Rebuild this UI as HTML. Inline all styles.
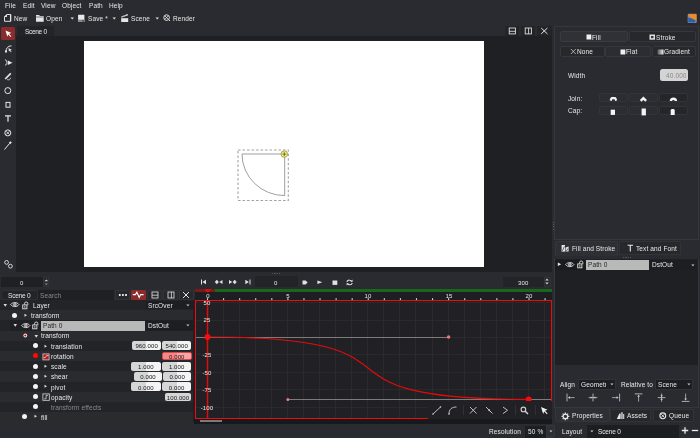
<!DOCTYPE html>
<html><head><meta charset="utf-8">
<style>
*{margin:0;padding:0;box-sizing:border-box}
html,body{width:700px;height:438px;overflow:hidden;background:#2a2b30;font-family:"Liberation Sans",sans-serif;color:#e8e8e8;font-size:6.5px;letter-spacing:0.12px;line-height:1}
.a{position:absolute}
.t{position:absolute;white-space:nowrap;line-height:1}
svg{overflow:visible}
.t{will-change:transform}
</style></head><body>
<div class="t" style="left:5px;top:2.5px;">File</div>
<div class="t" style="left:23px;top:2.5px;">Edit</div>
<div class="t" style="left:41px;top:2.5px;">View</div>
<div class="t" style="left:62px;top:2.5px;">Object</div>
<div class="t" style="left:89px;top:2.5px;">Path</div>
<div class="t" style="left:109px;top:2.5px;">Help</div>
<div class="t" style="left:13.7px;top:15.5px;">New</div>
<div class="t" style="left:46px;top:15.5px;">Open</div>
<div class="t" style="left:88px;top:15.5px;">Save *</div>
<div class="t" style="left:130.7px;top:15.5px;">Scene</div>
<div class="t" style="left:173px;top:15.5px;">Render</div>
<svg class="a" style="left:3px;top:13px;" width="10" height="10" viewBox="0 0 10 10"><path d="M4 1.5 H7.6 V8.3 H1.5 V4 Z" fill="none" stroke="#ddd" stroke-width="1"/><path d="M4 1 V4 H1 Z" fill="#e6e6e6"/><path d="M7.6 1.5 V8.3" stroke="#e6e6e6" stroke-width="1.3"/></svg>
<svg class="a" style="left:35px;top:14px;" width="10" height="9" viewBox="0 0 10 9"><path d="M1 1 H4 L5 2 H8.7 V7.7 H1 Z" fill="#e6e6e6"/><path d="M1 3 H8.7" stroke="#2a2b30" stroke-width="0.6"/></svg>
<svg class="a" style="left:69.8px;top:17px;" width="5" height="3" viewBox="0 0 5 3"><path d="M0.5 0.5 H4 L2.25 2.5 Z" fill="#ddd"/></svg>
<svg class="a" style="left:112.3px;top:17px;" width="5" height="3" viewBox="0 0 5 3"><path d="M0.5 0.5 H4 L2.25 2.5 Z" fill="#ddd"/></svg>
<svg class="a" style="left:154.8px;top:17px;" width="5" height="3" viewBox="0 0 5 3"><path d="M0.5 0.5 H4 L2.25 2.5 Z" fill="#ddd"/></svg>
<svg class="a" style="left:77px;top:14px;" width="10" height="9" viewBox="0 0 10 9"><rect x="1.1" y="0.7" width="6.3" height="7.3" rx="0.4" fill="#e8e8e8"/><rect x="1.1" y="5.6" width="6.3" height="2.4" fill="#8a8a8a"/><rect x="5.2" y="6.3" width="1.6" height="1.2" fill="#333"/></svg>
<svg class="a" style="left:120px;top:13px;" width="9" height="10" viewBox="0 0 9 10"><path d="M1.2 3.6 L7.6 1 L8 2.2 L1.6 4.8 Z" fill="#e6e6e6"/><path d="M2.8 3 L3.4 4.2 M4.8 2.2 L5.4 3.4" stroke="#2a2b30" stroke-width="0.5"/><rect x="1.2" y="5.2" width="7" height="3.8" fill="#e6e6e6"/></svg>
<svg class="a" style="left:163px;top:14px;" width="8" height="8" viewBox="0 0 8 8"><circle cx="3.6" cy="3.6" r="2.8" fill="none" stroke="#e6e6e6" stroke-width="1"/><path d="M2 2 L5.2 5.2 M5.2 2 L2 5.2" stroke="#e6e6e6" stroke-width="0.8"/><path d="M5.6 5.6 L7 7" stroke="#e6e6e6" stroke-width="1"/></svg>
<svg class="a" style="left:687px;top:13px;" width="11" height="11" viewBox="0 0 11 11"><rect x="0.7" y="0.7" width="9" height="9.3" rx="1" fill="#8a8f98"/><path d="M1.5 1.2 H9.4 V7.2 L4.6 5.4 L2 3 Z" fill="#f28a1c"/><path d="M1.2 4.4 L5 5.6 L8.6 7.6 L8 9.6 H1.2 Z" fill="#2a60b0"/></svg>
<div class="a" style="left:0px;top:26px;width:16px;height:246px;background:#2a2b30;"></div>
<div class="a" style="left:1px;top:27px;width:14px;height:13px;background:#8b2b2b;border-radius:1.5px"></div>
<svg class="a" style="left:4px;top:29px;" width="9" height="9" viewBox="0 0 9 9"><path d="M1.5 1.5 L7.5 4 L5 4.8 L7.3 7.2 L6.5 8 L4.2 5.6 L3.3 7.8 Z" fill="#fff"/></svg>
<svg class="a" style="left:4px;top:44px;" width="9" height="9" viewBox="0 0 9 9"><path d="M2 7.5 C2 4 4 2 7.5 1.8" fill="none" stroke="#e6e6e6" stroke-width="1"/><rect x="1" y="6.5" width="2" height="2" fill="#e6e6e6"/><path d="M4.5 4 L8 6 L6.5 6.3 L7.5 8 L6.8 8.3 L5.9 6.8 L4.9 7.6 Z" fill="#e6e6e6"/></svg>
<svg class="a" style="left:4px;top:58px;" width="9" height="9" viewBox="0 0 9 9"><path d="M1 1.8 C3.5 1.8 3.5 7.2 1 7.2" fill="none" stroke="#e6e6e6" stroke-width="1"/><path d="M3.8 2.5 L8.5 4.8 L3.8 7 Z" fill="#e6e6e6"/></svg>
<svg class="a" style="left:4px;top:71.5px;" width="9" height="9" viewBox="0 0 9 9"><path d="M1.2 7 L6.8 1.4" stroke="#e6e6e6" stroke-width="1.7"/><path d="M3.2 7.6 C5 8.2 6.6 7.6 6.4 5.8" fill="none" stroke="#e6e6e6" stroke-width="0.8"/></svg>
<svg class="a" style="left:4px;top:87px;" width="8" height="8" viewBox="0 0 8 8"><circle cx="3.8" cy="3.6" r="3" fill="none" stroke="#e6e6e6" stroke-width="1"/></svg>
<svg class="a" style="left:4px;top:101px;" width="8" height="8" viewBox="0 0 8 8"><rect x="2" y="1.4" width="4" height="4.8" fill="none" stroke="#e6e6e6" stroke-width="1"/></svg>
<svg class="a" style="left:4px;top:114px;" width="8" height="9" viewBox="0 0 8 9"><path d="M1 1.2 H7 V2.4 H4.6 V7.8 H3.4 V2.4 H1 Z" fill="#e6e6e6"/></svg>
<svg class="a" style="left:4px;top:129px;" width="8" height="8" viewBox="0 0 8 8"><circle cx="3.8" cy="3.9" r="3" fill="none" stroke="#e6e6e6" stroke-width="1"/><path d="M2.2 2.3 L5.4 5.5 M5.4 2.3 L2.2 5.5" stroke="#e6e6e6" stroke-width="0.9"/></svg>
<svg class="a" style="left:3px;top:140px;" width="10" height="11" viewBox="0 0 10 11"><path d="M1.5 9.5 L6.5 3.5" stroke="#e6e6e6" stroke-width="1"/><path d="M5.8 2.8 L7.5 1.2 L8.8 2.5 L7.2 4.2 Z" fill="#e6e6e6"/></svg>
<svg class="a" style="left:3px;top:259px;" width="11" height="11" viewBox="0 0 11 11"><circle cx="3.6" cy="3.4" r="1.9" fill="none" stroke="#e6e6e6" stroke-width="0.9"/><circle cx="7.4" cy="7.2" r="1.9" fill="none" stroke="#e6e6e6" stroke-width="0.9"/></svg>
<div class="a" style="left:16px;top:36px;width:536px;height:236px;background:#1f2024;"></div>
<div class="a" style="left:17px;top:26px;width:37px;height:10px;background:#232428;"></div>
<div class="t" style="left:25px;top:29.3px;letter-spacing:-0.3px">Scene 0</div>
<div class="a" style="left:504.5px;top:26px;width:14.5px;height:9.5px;background:#232428;"></div>
<div class="a" style="left:520.5px;top:26px;width:14.5px;height:9.5px;background:#232428;"></div>
<div class="a" style="left:536.5px;top:26px;width:15px;height:9.5px;background:#232428;"></div>
<svg class="a" style="left:508px;top:27px;" width="9" height="8" viewBox="0 0 9 8"><rect x="1.2" y="1" width="6.2" height="5.9" fill="none" stroke="#e6e6e6" stroke-width="0.85"/><path d="M1.2 4.3 H7.4" stroke="#e6e6e6" stroke-width="0.85"/></svg>
<svg class="a" style="left:524px;top:27px;" width="9" height="8" viewBox="0 0 9 8"><rect x="1.2" y="1" width="6.2" height="5.9" fill="none" stroke="#e6e6e6" stroke-width="0.85"/><path d="M4.6 1 V6.9" stroke="#e6e6e6" stroke-width="0.85"/></svg>
<svg class="a" style="left:540px;top:27px;" width="9" height="8" viewBox="0 0 9 8"><path d="M1.2 1 L7.4 6.9 M7.4 1 L1.2 6.9" stroke="#e6e6e6" stroke-width="1"/></svg>
<div class="a" style="left:84px;top:41px;width:400px;height:226px;background:#ffffff;"></div>
<svg class="a" style="left:236px;top:148px;" width="56" height="56" viewBox="0 0 56 56"><rect x="2" y="2" width="50.3" height="50.5" fill="none" stroke="#a3a3a3" stroke-width="1.1" stroke-dasharray="2.6 1.9"/><path d="M6 6 H48.7 V47.6 A42.7 41.6 0 0 1 6 6 Z" fill="none" stroke="#8e8e8e" stroke-width="0.85"/><circle cx="48.3" cy="6.1" r="3.3" fill="#f0ee6a" stroke="#6a6a40" stroke-width="0.55"/><path d="M46.4 6.1 H50.2 M48.3 4.2 V8" stroke="#3a3a30" stroke-width="0.65"/></svg>
<div class="a" style="left:554px;top:26px;width:145px;height:214px;background:transparent;border:1px solid #36373c"></div>
<div class="a" style="left:560px;top:31px;width:68px;height:11px;background:#303136;border:1px solid #3a3b40;border-radius:2px;"></div>
<div class="a" style="left:629px;top:31px;width:67px;height:11px;background:#27282c;border:1px solid #36373c;border-radius:2px;"></div>
<svg class="a" style="left:585.5px;top:34px;" width="6" height="6" viewBox="0 0 6 6"><rect x="0.5" y="0.5" width="4.8" height="5" fill="#f0f0f0"/></svg>
<div class="t" style="left:591.5px;top:34.6px;">Fill</div>
<svg class="a" style="left:648.5px;top:34px;" width="7" height="6" viewBox="0 0 7 6"><rect x="0.5" y="0.5" width="5.5" height="5.2" fill="#e0e0e0"/><rect x="2" y="2" width="2.5" height="2.2" fill="#333"/></svg>
<div class="t" style="left:655.5px;top:34.6px;">Stroke</div>
<div class="a" style="left:560px;top:46px;width:45px;height:11px;background:#27282c;border:1px solid #36373c;border-radius:2px;"></div>
<div class="a" style="left:605px;top:46px;width:46px;height:11px;background:#2c2d32;border:1px solid #36373c;border-radius:2px;"></div>
<div class="a" style="left:652px;top:46px;width:44px;height:11px;background:#27282c;border:1px solid #36373c;border-radius:2px;"></div>
<svg class="a" style="left:570px;top:48px;" width="7" height="7" viewBox="0 0 7 7"><path d="M0.8 1 L5.8 6 M5.8 1 L0.8 6" stroke="#e0e0e0" stroke-width="0.7"/></svg>
<div class="t" style="left:577px;top:49px;">None</div>
<svg class="a" style="left:619.5px;top:48.5px;" width="6" height="6" viewBox="0 0 6 6"><rect x="0.5" y="0.5" width="4.8" height="5" fill="#f0f0f0"/></svg>
<div class="t" style="left:625.5px;top:49px;">Flat</div>
<svg class="a" style="left:656.5px;top:48.5px;" width="7" height="6" viewBox="0 0 7 6"><defs><linearGradient id="gg"><stop offset="0" stop-color="#555"/><stop offset="1" stop-color="#eee"/></linearGradient></defs><rect x="0.5" y="0.5" width="6" height="5" fill="url(#gg)"/></svg>
<div class="t" style="left:663.5px;top:49px;">Gradient</div>
<div class="t" style="left:568px;top:73px;">Width</div>
<div class="a" style="left:660px;top:69px;width:28px;height:12px;background:#d4d4d4;border-radius:2.5px"></div>
<div class="t" style="left:665.5px;top:72.5px;color:#8a8a8a;">40.000</div>
<div class="t" style="left:568px;top:95.5px;">Join:</div>
<div class="t" style="left:568px;top:108.2px;">Cap:</div>
<div class="a" style="left:599.3px;top:93.4px;width:29px;height:9px;background:#2c2d32;border:1px solid #33343a;border-radius:2px;"></div>
<div class="a" style="left:599.3px;top:106.3px;width:29px;height:9.2px;background:#2c2d32;border:1px solid #33343a;border-radius:2px;"></div>
<div class="a" style="left:628.6px;top:93.4px;width:29px;height:9px;background:#2c2d32;border:1px solid #33343a;border-radius:2px;"></div>
<div class="a" style="left:628.6px;top:106.3px;width:29px;height:9.2px;background:#2c2d32;border:1px solid #33343a;border-radius:2px;"></div>
<div class="a" style="left:658.6px;top:93.4px;width:29px;height:9px;background:#25262a;border:1px solid #33343a;border-radius:2px;"></div>
<div class="a" style="left:658.6px;top:106.3px;width:29px;height:9.2px;background:#25262a;border:1px solid #33343a;border-radius:2px;"></div>
<svg class="a" style="left:608.5px;top:95px;" width="9" height="7" viewBox="0 0 9 7"><path d="M1.6 5.6 L2.6 3.2 H6.2 L7.2 5.6" fill="none" stroke="#f4f4f4" stroke-width="2.2" stroke-linejoin="bevel"/></svg>
<svg class="a" style="left:638.5px;top:94.5px;" width="9" height="7" viewBox="0 0 9 7"><path d="M1.7 5.9 L4.4 3.2 L7.1 5.9" fill="none" stroke="#f4f4f4" stroke-width="2.4" stroke-linejoin="miter"/></svg>
<svg class="a" style="left:668.5px;top:94.5px;" width="9" height="7" viewBox="0 0 9 7"><path d="M1.9 6 C1.9 2.9 6.9 2.9 6.9 6" fill="none" stroke="#f4f4f4" stroke-width="2.4"/></svg>
<svg class="a" style="left:610px;top:109px;" width="6" height="7" viewBox="0 0 6 7"><rect x="0.7" y="0.7" width="4.3" height="5.2" fill="#f4f4f4"/></svg>
<svg class="a" style="left:640.5px;top:107.5px;" width="6" height="8" viewBox="0 0 6 8"><rect x="0.6" y="0.5" width="4.3" height="6.9" fill="#f4f4f4"/></svg>
<svg class="a" style="left:670px;top:108px;" width="6" height="8" viewBox="0 0 6 8"><path d="M0.7 2.2 C0.7 0.6 4.7 0.6 4.7 2.2 V6.9 H0.7 Z" fill="#f4f4f4"/></svg>
<div class="a" style="left:555px;top:241px;width:63px;height:14.5px;background:#2e2f34;border:1px solid #35363b;border-bottom:none;border-radius:2px 2px 0 0"></div>
<div class="a" style="left:619px;top:241px;width:62px;height:14px;background:#27282c;border:1px solid #323338;border-radius:2px 2px 0 0"></div>
<svg class="a" style="left:561px;top:244px;" width="9" height="9" viewBox="0 0 9 9"><path d="M0.6 1 H4 V7.6 H0.6 Z" fill="#e6e6e6"/><path d="M4.6 3.4 L7.6 2.6 V7.6 H4.6 Z" fill="#e6e6e6"/><path d="M1.4 6.8 L3.4 2.4 M5.4 7 L7 4.4" stroke="#2e2f34" stroke-width="0.7"/></svg>
<div class="t" style="left:572px;top:246px;">Fill and Stroke</div>
<svg class="a" style="left:626.5px;top:244px;" width="7" height="9" viewBox="0 0 7 9"><path d="M0.6 1.3 H6 M3.3 1.3 V7.6" stroke="#e6e6e6" stroke-width="1.1"/></svg>
<div class="t" style="left:636px;top:246px;">Text and Font</div>
<div class="a" style="left:623.0px;top:257px;width:1.2px;height:1px;background:#555;"></div>
<div class="a" style="left:625.4px;top:257px;width:1.2px;height:1px;background:#555;"></div>
<div class="a" style="left:627.8px;top:257px;width:1.2px;height:1px;background:#555;"></div>
<div class="a" style="left:630.2px;top:257px;width:1.2px;height:1px;background:#555;"></div>
<div class="a" style="left:554px;top:259px;width:145px;height:106px;background:#1f2024;border-left:1px solid #36373c;border-right:1px solid #36373c"></div>
<div class="a" style="left:555px;top:259.5px;width:31px;height:10px;background:#1a1b1e;"></div>
<svg class="a" style="left:557px;top:262px;" width="5" height="5" viewBox="0 0 5 5"><path d="M0.8 0.6 L4.2 2.3 L0.8 4 Z" fill="#e8e8e8"/></svg>
<svg class="a" style="left:565px;top:261px;" width="10" height="8" viewBox="0 0 10 8"><path d="M0.6 3.6 C2.6 0.9 7 0.9 9 3.6 C7 6.3 2.6 6.3 0.6 3.6 Z" fill="none" stroke="#e0e0e0" stroke-width="0.9"/><circle cx="4.8" cy="3.6" r="1.5" fill="#9a9a9a" stroke="#e0e0e0" stroke-width="0.6"/></svg>
<svg class="a" style="left:577px;top:260px;" width="8" height="9" viewBox="0 0 8 9"><path d="M2.6 3.8 V2.2 C2.6 0.6 5.8 0.6 5.8 2.2 V4.2" fill="none" stroke="#e0e0e0" stroke-width="0.9"/><rect x="0.7" y="3.9" width="4.2" height="3.9" fill="#2a2b2f" stroke="#e0e0e0" stroke-width="0.9"/><rect x="2.3" y="5.2" width="1" height="1.4" fill="#e0e0e0"/></svg>
<div class="a" style="left:586px;top:260px;width:63px;height:10px;background:#b9b9b9;"></div>
<div class="t" style="left:588px;top:262.3px;color:#262626;">Path 0</div>
<div class="a" style="left:649px;top:260px;width:48px;height:10px;background:#1d1e22;"></div>
<div class="t" style="left:651.5px;top:262px;">DstOut</div>
<svg class="a" style="left:691px;top:263.5px;" width="4" height="3" viewBox="0 0 4 3"><path d="M0.3 0.5 H3.5 L1.9 2.2 Z" fill="#ccc"/></svg>
<div class="t" style="left:559.5px;top:382px;">Align</div>
<div class="a" style="left:578px;top:379px;width:38px;height:10.5px;background:#1d1e22;border:1px solid #323338;border-radius:1px"></div>
<div class="t" style="left:580.5px;top:382px;width:25px;overflow:hidden">Geometry</div>
<svg class="a" style="left:610px;top:383px;" width="4" height="3" viewBox="0 0 4 3"><path d="M0.3 0.5 H3.5 L1.9 2.2 Z" fill="#ccc"/></svg>
<div class="t" style="left:620.5px;top:382px;">Relative to</div>
<div class="a" style="left:655px;top:379px;width:38px;height:10.5px;background:#1d1e22;border:1px solid #323338;border-radius:1px"></div>
<div class="t" style="left:657.5px;top:382px;">Scene</div>
<svg class="a" style="left:687px;top:383px;" width="4" height="3" viewBox="0 0 4 3"><path d="M0.3 0.5 H3.5 L1.9 2.2 Z" fill="#ccc"/></svg>
<svg class="a" style="left:565.5px;top:393px;" width="10" height="10" viewBox="0 0 10 10"><path d="M1 0.6 V8.4" stroke="#cfcfcf" stroke-width="0.8"/><path d="M2.6 4.6 H8.6" stroke="#cfcfcf" stroke-width="0.7"/><path d="M2 4.6 L4 3.3 V5.9 Z" fill="#cfcfcf"/></svg>
<svg class="a" style="left:587.5px;top:393px;" width="10" height="10" viewBox="0 0 10 10"><path d="M5 0.6 V8.4" stroke="#cfcfcf" stroke-width="0.8"/><path d="M0.6 4.6 H9.4" stroke="#cfcfcf" stroke-width="0.7"/><path d="M4.4 4.6 L2.6 3.4 V5.8 Z M5.6 4.6 L7.4 3.4 V5.8 Z" fill="#cfcfcf"/></svg>
<svg class="a" style="left:610.5px;top:393px;" width="10" height="10" viewBox="0 0 10 10"><path d="M8.6 0.6 V8.4" stroke="#cfcfcf" stroke-width="0.8"/><path d="M1 4.6 H7" stroke="#cfcfcf" stroke-width="0.7"/><path d="M7.6 4.6 L5.6 3.3 V5.9 Z" fill="#cfcfcf"/></svg>
<svg class="a" style="left:633.5px;top:393px;" width="10" height="10" viewBox="0 0 10 10"><path d="M0.8 0.9 H8.4" stroke="#cfcfcf" stroke-width="0.8"/><path d="M4.6 2.4 V8.6" stroke="#cfcfcf" stroke-width="0.7"/><path d="M4.6 1.8 L3.3 3.8 H5.9 Z" fill="#cfcfcf"/></svg>
<svg class="a" style="left:657px;top:393px;" width="10" height="10" viewBox="0 0 10 10"><path d="M0.8 4.6 H8.4" stroke="#cfcfcf" stroke-width="0.8"/><path d="M4.6 0.4 V8.8" stroke="#cfcfcf" stroke-width="0.7"/><path d="M4.6 4 L3.4 2.3 H5.8 Z M4.6 5.2 L3.4 6.9 H5.8 Z" fill="#cfcfcf"/></svg>
<svg class="a" style="left:680.5px;top:393px;" width="10" height="10" viewBox="0 0 10 10"><path d="M0.8 8.4 H8.4" stroke="#cfcfcf" stroke-width="0.8"/><path d="M4.6 0.6 V6.8" stroke="#cfcfcf" stroke-width="0.7"/><path d="M4.6 7.4 L3.3 5.4 H5.9 Z" fill="#cfcfcf"/></svg>
<div class="a" style="left:554px;top:364px;width:145px;height:44px;background:transparent;border:1px solid #36373c;border-top:none"></div>
<div class="a" style="left:555px;top:408px;width:54.5px;height:14px;background:#2e2f34;border:1px solid #35363b;border-top:none;border-radius:0 0 2px 2px"></div>
<div class="a" style="left:610.3px;top:408.5px;width:41px;height:13.5px;background:#26272b;border:1px solid #323338;border-radius:0 0 2px 2px"></div>
<div class="a" style="left:652.8px;top:408.5px;width:41px;height:13.5px;background:#26272b;border:1px solid #323338;border-radius:0 0 2px 2px"></div>
<svg class="a" style="left:560.5px;top:411.5px;" width="9" height="9" viewBox="0 0 9 9"><circle cx="4.4" cy="4.4" r="2.3" fill="none" stroke="#e6e6e6" stroke-width="1.2"/><path d="M6.90 4.40 L8.30 4.40 M6.17 6.17 L7.16 7.16 M4.40 6.90 L4.40 8.30 M2.63 6.17 L1.64 7.16 M1.90 4.40 L0.50 4.40 M2.63 2.63 L1.64 1.64 M4.40 1.90 L4.40 0.50 M6.17 2.63 L7.16 1.64 " stroke="#e6e6e6" stroke-width="1.2"/></svg>
<div class="t" style="left:572px;top:413px;">Properties</div>
<svg class="a" style="left:616px;top:411px;" width="9" height="9" viewBox="0 0 9 9"><path d="M0.8 8 L3.4 2.6 H4.6 V8 Z" fill="#e6e6e6"/><path d="M5.3 8 V1.2 H6.6 V8 Z" fill="#e6e6e6"/><path d="M7.2 8 V3 H8.2 V8 Z" fill="#e6e6e6"/></svg>
<div class="t" style="left:626.5px;top:413px;">Assets</div>
<svg class="a" style="left:658.5px;top:411.5px;" width="8" height="8" viewBox="0 0 8 8"><circle cx="3.8" cy="3.8" r="2.9" fill="none" stroke="#e6e6e6" stroke-width="1.1"/><path d="M2.3 2.3 L5.3 5.3 M5.3 2.3 L2.3 5.3" stroke="#e6e6e6" stroke-width="0.9"/></svg>
<div class="t" style="left:669px;top:413px;">Queue</div>
<div class="a" style="left:1px;top:277px;width:42px;height:9.5px;background:#202024;border-radius:1px"></div>
<div class="t" style="left:19.8px;top:279.6px;font-size:6px;">0</div>
<div class="a" style="left:43px;top:277px;width:5.5px;height:9.5px;background:#27282c;border:1px solid #323338"></div>
<svg class="a" style="left:43.5px;top:277.5px;" width="5" height="9" viewBox="0 0 5 9"><path d="M0.4 3.2 L2.3 1.4 L4.2 3.2 Z" fill="#d0d0d0"/><path d="M0.6 5.6 L2.3 7.2 L4 5.6 Z" fill="#888"/></svg>
<div class="a" style="left:1px;top:290px;width:37px;height:9.5px;background:#232428;border:1px solid #2f3035;border-radius:1px"></div>
<div class="t" style="left:8px;top:293px;letter-spacing:-0.2px">Scene 0</div>
<div class="a" style="left:38px;top:290px;width:76px;height:9.5px;background:#1f2024;"></div>
<div class="t" style="left:40.2px;top:293px;color:#8a8a8a;">Search</div>
<div class="a" style="left:115px;top:290px;width:14.5px;height:9.5px;background:#27282c;border:1px solid #323338;border-radius:1px"></div>
<svg class="a" style="left:117.5px;top:292px;" width="10" height="6" viewBox="0 0 10 6"><circle cx="1.8" cy="3" r="1.05" fill="#fff"/><circle cx="4.9" cy="3" r="1.05" fill="#fff"/><circle cx="8" cy="3" r="1.05" fill="#fff"/></svg>
<div class="a" style="left:130.5px;top:290px;width:15.5px;height:9.5px;background:#8b2b2b;border-radius:1px"></div>
<svg class="a" style="left:132px;top:291px;" width="13" height="8" viewBox="0 0 13 8"><path d="M0.8 3.6 H3.4 L4.9 1.2 L7.2 6.4 L8.6 3.6 H11.6" fill="none" stroke="#fff" stroke-width="1.1"/></svg>
<div class="a" style="left:147px;top:290px;width:14.5px;height:9.5px;background:#27282c;border:1px solid #323338;border-radius:1px"></div>
<svg class="a" style="left:150.5px;top:291px;" width="8" height="8" viewBox="0 0 8 8"><rect x="1" y="1" width="6" height="6" fill="none" stroke="#e6e6e6" stroke-width="0.8"/><path d="M1 4.2 H7" stroke="#e6e6e6" stroke-width="0.8"/></svg>
<div class="a" style="left:163px;top:290px;width:14.5px;height:9.5px;background:#27282c;border:1px solid #323338;border-radius:1px"></div>
<svg class="a" style="left:166.5px;top:291px;" width="8" height="8" viewBox="0 0 8 8"><rect x="1" y="1" width="6" height="6" fill="none" stroke="#e6e6e6" stroke-width="0.8"/><path d="M4.4 1 V7" stroke="#e6e6e6" stroke-width="0.8"/></svg>
<div class="a" style="left:179px;top:290px;width:14.5px;height:9.5px;background:#27282c;border:1px solid #323338;border-radius:1px"></div>
<svg class="a" style="left:182px;top:291px;" width="8" height="8" viewBox="0 0 8 8"><path d="M1 1 L7 7 M7 1 L1 7" stroke="#e6e6e6" stroke-width="1"/></svg>
<div class="a" style="left:0px;top:300.0px;width:195px;height:10.7px;background:#232428;"></div>
<div class="a" style="left:0px;top:310.2px;width:195px;height:10.7px;background:#2a2b2f;"></div>
<div class="a" style="left:0px;top:320.4px;width:195px;height:10.7px;background:#232428;"></div>
<div class="a" style="left:0px;top:330.6px;width:195px;height:10.7px;background:#2a2b2f;"></div>
<div class="a" style="left:0px;top:340.8px;width:195px;height:10.7px;background:#232428;"></div>
<div class="a" style="left:0px;top:351.0px;width:195px;height:10.7px;background:#2a2b2f;"></div>
<div class="a" style="left:0px;top:361.2px;width:195px;height:10.7px;background:#232428;"></div>
<div class="a" style="left:0px;top:371.4px;width:195px;height:10.7px;background:#2a2b2f;"></div>
<div class="a" style="left:0px;top:381.6px;width:195px;height:10.7px;background:#232428;"></div>
<div class="a" style="left:0px;top:391.8px;width:195px;height:10.7px;background:#2a2b2f;"></div>
<div class="a" style="left:0px;top:402.0px;width:195px;height:10.7px;background:#232428;"></div>
<div class="a" style="left:0px;top:412.2px;width:195px;height:10.7px;background:#2a2b2f;"></div>
<div class="a" style="left:10px;top:320.4px;width:185px;height:10.2px;background:#1f2024;"></div>
<svg class="a" style="left:2.5px;top:303.0px;" width="5" height="5" viewBox="0 0 5 5"><path d="M0.5 1 H4 L2.25 3.8 Z" fill="#ddd"/></svg>
<svg class="a" style="left:10px;top:301.2px;" width="10" height="8" viewBox="0 0 10 8"><path d="M0.6 3.6 C2.6 0.9 7 0.9 9 3.6 C7 6.3 2.6 6.3 0.6 3.6 Z" fill="none" stroke="#e0e0e0" stroke-width="0.9"/><circle cx="4.8" cy="3.6" r="1.5" fill="#9a9a9a" stroke="#e0e0e0" stroke-width="0.6"/></svg>
<svg class="a" style="left:21.5px;top:300.6px;" width="8" height="9" viewBox="0 0 8 9"><path d="M2.6 3.8 V2.2 C2.6 0.6 5.8 0.6 5.8 2.2 V4.2" fill="none" stroke="#e0e0e0" stroke-width="0.9"/><rect x="0.7" y="3.9" width="4.2" height="3.9" fill="#2a2b2f" stroke="#e0e0e0" stroke-width="0.9"/><rect x="2.3" y="5.2" width="1" height="1.4" fill="#e0e0e0"/></svg>
<div class="t" style="left:33px;top:303.2px;">Layer</div>
<div class="a" style="left:145.5px;top:300.7px;width:48px;height:8.7px;background:#1d1e22;"></div>
<div class="t" style="left:148px;top:302.8px;">SrcOver</div>
<svg class="a" style="left:186px;top:303.8px;" width="4" height="3" viewBox="0 0 4 3"><path d="M0.3 0.5 H3.5 L1.9 2.2 Z" fill="#ccc"/></svg>
<svg class="a" style="left:12.4px;top:312.7px;" width="6" height="6" viewBox="0 0 6 6"><circle cx="2.5" cy="2.5" r="2.5" fill="#f4f4f4"/></svg>
<svg class="a" style="left:23.8px;top:312.8px;" width="4" height="5" viewBox="0 0 4 5"><path d="M0.5 0.8 L3 2.3 L0.5 3.8 Z" fill="#ddd"/></svg>
<div class="t" style="left:30.7px;top:312.5px;">transform</div>
<svg class="a" style="left:12.8px;top:323.4px;" width="5" height="5" viewBox="0 0 5 5"><path d="M0.5 1 H4 L2.25 3.8 Z" fill="#ddd"/></svg>
<svg class="a" style="left:20.5px;top:321.59999999999997px;" width="10" height="8" viewBox="0 0 10 8"><path d="M0.6 3.6 C2.6 0.9 7 0.9 9 3.6 C7 6.3 2.6 6.3 0.6 3.6 Z" fill="none" stroke="#e0e0e0" stroke-width="0.9"/><circle cx="4.8" cy="3.6" r="1.5" fill="#9a9a9a" stroke="#e0e0e0" stroke-width="0.6"/></svg>
<svg class="a" style="left:31.5px;top:321.0px;" width="8" height="9" viewBox="0 0 8 9"><path d="M2.6 3.8 V2.2 C2.6 0.6 5.8 0.6 5.8 2.2 V4.2" fill="none" stroke="#e0e0e0" stroke-width="0.9"/><rect x="0.7" y="3.9" width="4.2" height="3.9" fill="#2a2b2f" stroke="#e0e0e0" stroke-width="0.9"/><rect x="2.3" y="5.2" width="1" height="1.4" fill="#e0e0e0"/></svg>
<div class="a" style="left:41px;top:320.59999999999997px;width:104px;height:10.2px;background:#b8b8b8;"></div>
<div class="t" style="left:43px;top:323.4px;color:#262626;">Path 0</div>
<div class="a" style="left:145.5px;top:321.2px;width:48px;height:8.7px;background:#1d1e22;"></div>
<div class="t" style="left:148px;top:323.0px;">DstOut</div>
<svg class="a" style="left:186px;top:324.4px;" width="4" height="3" viewBox="0 0 4 3"><path d="M0.3 0.5 H3.5 L1.9 2.2 Z" fill="#ccc"/></svg>
<svg class="a" style="left:23px;top:333.1px;" width="6" height="6" viewBox="0 0 6 6"><circle cx="2.3" cy="2.5" r="1.9" fill="#f4f4f4"/><circle cx="2.3" cy="2.5" r="1.1" fill="#e00"/></svg>
<svg class="a" style="left:33.5px;top:333.6px;" width="5" height="5" viewBox="0 0 5 5"><path d="M0.5 1 H4 L2.25 3.8 Z" fill="#ddd"/></svg>
<div class="t" style="left:41px;top:333.1px;">transform</div>
<svg class="a" style="left:32.7px;top:343.2px;" width="6" height="6" viewBox="0 0 6 6"><circle cx="2.5" cy="2.5" r="2.5" fill="#f4f4f4"/></svg>
<svg class="a" style="left:44px;top:343.5px;" width="4" height="5" viewBox="0 0 4 5"><path d="M0.5 0.8 L3 2.3 L0.5 3.8 Z" fill="#ddd"/></svg>
<div class="t" style="left:50.7px;top:343.7px;">translation</div>
<svg class="a" style="left:32.7px;top:353.4px;" width="6" height="6" viewBox="0 0 6 6"><circle cx="2.5" cy="2.5" r="2.5" fill="#ff0a0a"/></svg>
<svg class="a" style="left:41.5px;top:352.5px;" width="8" height="8" viewBox="0 0 8 8"><rect x="0.5" y="0.5" width="7" height="6.8" fill="#c9c9c9"/><rect x="1.3" y="1.3" width="5.4" height="5.2" fill="#b02020"/><path d="M1.6 4.6 H3.2 L4.6 2.6 H6.4" fill="none" stroke="#fff" stroke-width="0.7"/></svg>
<div class="t" style="left:50.7px;top:353.9px;">rotation</div>
<svg class="a" style="left:32.7px;top:363.59999999999997px;" width="6" height="6" viewBox="0 0 6 6"><circle cx="2.5" cy="2.5" r="2.5" fill="#f4f4f4"/></svg>
<svg class="a" style="left:44px;top:363.9px;" width="4" height="5" viewBox="0 0 4 5"><path d="M0.5 0.8 L3 2.3 L0.5 3.8 Z" fill="#ddd"/></svg>
<div class="t" style="left:50.7px;top:364.09999999999997px;">scale</div>
<svg class="a" style="left:32.7px;top:373.79999999999995px;" width="6" height="6" viewBox="0 0 6 6"><circle cx="2.5" cy="2.5" r="2.5" fill="#f4f4f4"/></svg>
<svg class="a" style="left:44px;top:374.09999999999997px;" width="4" height="5" viewBox="0 0 4 5"><path d="M0.5 0.8 L3 2.3 L0.5 3.8 Z" fill="#ddd"/></svg>
<div class="t" style="left:50.7px;top:374.29999999999995px;">shear</div>
<svg class="a" style="left:32.7px;top:384.0px;" width="6" height="6" viewBox="0 0 6 6"><circle cx="2.5" cy="2.5" r="2.5" fill="#f4f4f4"/></svg>
<svg class="a" style="left:44px;top:384.3px;" width="4" height="5" viewBox="0 0 4 5"><path d="M0.5 0.8 L3 2.3 L0.5 3.8 Z" fill="#ddd"/></svg>
<div class="t" style="left:50.7px;top:384.5px;">pivot</div>
<svg class="a" style="left:32.7px;top:394.2px;" width="6" height="6" viewBox="0 0 6 6"><circle cx="2.5" cy="2.5" r="2.5" fill="#f4f4f4"/></svg>
<svg class="a" style="left:41.5px;top:393.3px;" width="8" height="8" viewBox="0 0 8 8"><rect x="0.9" y="0.9" width="6.4" height="6.4" fill="none" stroke="#d8d8d8" stroke-width="0.8"/><path d="M2.2 5.8 H4.1 V2.4 H6" fill="none" stroke="#d8d8d8" stroke-width="0.8"/></svg>
<div class="t" style="left:50.7px;top:394.7px;">opacity</div>
<svg class="a" style="left:32.7px;top:404.4px;" width="6" height="6" viewBox="0 0 6 6"><circle cx="2.5" cy="2.5" r="2.5" fill="#f4f4f4"/></svg>
<div class="t" style="left:50.7px;top:404.9px;color:#8a8a8a;">transform effects</div>
<svg class="a" style="left:22.4px;top:414.09999999999997px;" width="6" height="6" viewBox="0 0 6 6"><circle cx="2.5" cy="2.5" r="2.5" fill="#f4f4f4"/></svg>
<svg class="a" style="left:33.6px;top:414.4px;" width="4" height="5" viewBox="0 0 4 5"><path d="M0.5 0.8 L3 2.3 L0.5 3.8 Z" fill="#ddd"/></svg>
<div class="t" style="left:41px;top:414.8px;">fill</div>
<div class="a" style="left:131.5px;top:341px;width:29.3px;height:8.8px;background:#f4f4f4;border-radius:2px;background:linear-gradient(to right,#d6d6d6 0,#d6d6d6 50%,#f4f4f4 50%,#f4f4f4 100%);"></div>
<div class="t" style="left:131.5px;top:343.40px;width:29.3px;text-align:center;color:#161616;font-size:6px">960.000</div>
<div class="a" style="left:161.8px;top:341px;width:29.4px;height:8.8px;background:#f4f4f4;border-radius:2px;background:linear-gradient(to right,#d6d6d6 0,#d6d6d6 50%,#f4f4f4 50%,#f4f4f4 100%);"></div>
<div class="t" style="left:161.8px;top:343.40px;width:29.4px;text-align:center;color:#161616;font-size:6px">540.000</div>
<div class="a" style="left:162px;top:352px;width:29.5px;height:8.4px;background:#f6a6a6;border-radius:2px;background:linear-gradient(to right,#f08a8a 0,#f08a8a 50%,#f6a6a6 50%,#f6a6a6 100%);border:0.8px solid #e04848;"></div>
<div class="t" style="left:162px;top:354.40px;width:29.5px;text-align:center;color:#161616;font-size:6px">0.000</div>
<div class="a" style="left:131.2px;top:362px;width:29.7px;height:8.8px;background:#f4f4f4;border-radius:2px;background:linear-gradient(to right,#d6d6d6 0,#d6d6d6 50%,#f4f4f4 50%,#f4f4f4 100%);"></div>
<div class="t" style="left:131.2px;top:364.40px;width:29.7px;text-align:center;color:#161616;font-size:6px">1.000</div>
<div class="a" style="left:162px;top:362px;width:29.4px;height:8.8px;background:#f4f4f4;border-radius:2px;background:linear-gradient(to right,#d6d6d6 0,#d6d6d6 50%,#f4f4f4 50%,#f4f4f4 100%);"></div>
<div class="t" style="left:162px;top:364.40px;width:29.4px;text-align:center;color:#161616;font-size:6px">1.000</div>
<div class="a" style="left:133.5px;top:372px;width:28px;height:8.7px;background:#f4f4f4;border-radius:2px;background:linear-gradient(to right,#d6d6d6 0,#d6d6d6 50%,#f4f4f4 50%,#f4f4f4 100%);"></div>
<div class="t" style="left:133.5px;top:374.40px;width:28px;text-align:center;color:#161616;font-size:6px">0.000</div>
<div class="a" style="left:163px;top:372px;width:28.4px;height:8.7px;background:#f4f4f4;border-radius:2px;background:linear-gradient(to right,#d6d6d6 0,#d6d6d6 50%,#f4f4f4 50%,#f4f4f4 100%);"></div>
<div class="t" style="left:163px;top:374.40px;width:28.4px;text-align:center;color:#161616;font-size:6px">0.000</div>
<div class="a" style="left:131.2px;top:382.2px;width:29.8px;height:8.6px;background:#f4f4f4;border-radius:2px;background:linear-gradient(to right,#d6d6d6 0,#d6d6d6 50%,#f4f4f4 50%,#f4f4f4 100%);"></div>
<div class="t" style="left:131.2px;top:384.60px;width:29.8px;text-align:center;color:#161616;font-size:6px">0.000</div>
<div class="a" style="left:162px;top:382.2px;width:29.2px;height:8.6px;background:#f4f4f4;border-radius:2px;background:linear-gradient(to right,#d6d6d6 0,#d6d6d6 50%,#f4f4f4 50%,#f4f4f4 100%);"></div>
<div class="t" style="left:162px;top:384.60px;width:29.2px;text-align:center;color:#161616;font-size:6px">0.000</div>
<div class="a" style="left:165.3px;top:392.5px;width:26px;height:8.7px;background:#f4f4f4;border-radius:2px;background:linear-gradient(to right,#d6d6d6 0,#d6d6d6 100%,#f4f4f4 100%,#f4f4f4 100%);"></div>
<div class="t" style="left:165.3px;top:394.90px;width:26px;text-align:center;color:#161616;font-size:6px">100.000</div>
<div class="a" style="left:193px;top:300px;width:2px;height:122px;background:#1f2024;"></div>
<div class="a" style="left:272.0px;top:272.5px;width:1.2px;height:1px;background:#555;"></div>
<div class="a" style="left:274.4px;top:272.5px;width:1.2px;height:1px;background:#555;"></div>
<div class="a" style="left:276.8px;top:272.5px;width:1.2px;height:1px;background:#555;"></div>
<div class="a" style="left:279.2px;top:272.5px;width:1.2px;height:1px;background:#555;"></div>
<svg class="a" style="left:200px;top:279px;" width="7" height="6" viewBox="0 0 7 6"><path d="M1.5 0.5 V5.5" stroke="#e0e0e0" stroke-width="1"/><path d="M6 0.7 V5.3 L2.4 3 Z" fill="#e0e0e0"/></svg>
<svg class="a" style="left:213.5px;top:279px;" width="9" height="6" viewBox="0 0 9 6"><path d="M0.8 3 L2.8 0.8 L4.8 3 L2.8 5.2 Z" fill="#e0e0e0"/><path d="M8.5 0.9 V5.1 L5.2 3 Z" fill="#e0e0e0"/></svg>
<svg class="a" style="left:228.5px;top:279px;" width="9" height="6" viewBox="0 0 9 6"><path d="M0 0.9 V5.1 L3.3 3 Z" fill="#e0e0e0"/><path d="M3.7 3 L5.7 0.8 L7.7 3 L5.7 5.2 Z" fill="#e0e0e0"/></svg>
<svg class="a" style="left:244.5px;top:279px;" width="7" height="6" viewBox="0 0 7 6"><path d="M5 0.5 V5.5" stroke="#e0e0e0" stroke-width="1"/><path d="M0.3 0.7 V5.3 L3.9 3 Z" fill="#e0e0e0"/></svg>
<div class="a" style="left:254.5px;top:276px;width:43px;height:11.2px;background:#232428;"></div>
<div class="t" style="left:274px;top:279.8px;font-size:6px;">0</div>
<svg class="a" style="left:301.5px;top:279.5px;" width="7" height="6" viewBox="0 0 7 6"><path d="M0.5 0.4 H3.6 L5.6 2.5 L3.6 4.6 H0.5 Z" fill="#e0e0e0"/></svg>
<svg class="a" style="left:316.5px;top:280px;" width="6" height="5" viewBox="0 0 6 5"><path d="M0.4 0.5 V4 L5.3 2.2 Z" fill="#e0e0e0"/></svg>
<svg class="a" style="left:331.5px;top:279.5px;" width="6" height="6" viewBox="0 0 6 6"><rect x="0.5" y="0.5" width="4.8" height="4.4" fill="#e0e0e0"/></svg>
<svg class="a" style="left:345.5px;top:279px;" width="7" height="7" viewBox="0 0 7 7"><path d="M1 3 C1.2 1.6 2.4 0.9 3.6 1.1 C4.6 1.2 5.3 1.7 5.6 2.4" fill="none" stroke="#e0e0e0" stroke-width="1.1"/><path d="M6.2 3.8 C6 5.2 4.8 5.9 3.6 5.8 C2.6 5.7 1.8 5.2 1.5 4.5" fill="none" stroke="#e0e0e0" stroke-width="1.1"/><path d="M4.4 2.8 H6.6 V0.6 Z M2.8 4.2 H0.6 V6.4 Z" fill="#e0e0e0"/></svg>
<div class="a" style="left:502.5px;top:276.5px;width:41px;height:10px;background:#232428;"></div>
<div class="t" style="left:517.5px;top:279.8px;font-size:6px;">300</div>
<div class="a" style="left:543.5px;top:276.5px;width:7px;height:10px;background:#27282c;border:1px solid #323338"></div>
<svg class="a" style="left:544px;top:277px;" width="6" height="9" viewBox="0 0 6 9"><path d="M1.2 3.4 L3 1.6 L4.8 3.4 Z M1.2 5.6 L3 7.4 L4.8 5.6 Z" fill="#ccc"/></svg>
<div class="a" style="left:195px;top:289px;width:357px;height:2.6px;background:#1a661a;"></div>
<div class="a" style="left:195px;top:289px;width:20.2px;height:2.7px;background:#7a1a1a;"></div>
<div class="a" style="left:195px;top:291.7px;width:357px;height:8.5px;background:#1d1e22;"></div>
<svg class="a" style="left:203.6px;top:289px;" width="8" height="5" viewBox="0 0 8 5"><path d="M0.2 0.2 H7.4 L3.8 3.8 Z" fill="#e01010"/></svg>
<svg class="a" style="left:195px;top:291.5px;" width="357" height="9" viewBox="0 0 357 9"><rect x="11.95" y="6.2" width="1.1" height="2.3" fill="#d8d8d8"/><rect x="28.02" y="6.2" width="1.1" height="2.3" fill="#d8d8d8"/><rect x="44.10" y="6.2" width="1.1" height="2.3" fill="#d8d8d8"/><rect x="60.17" y="6.2" width="1.1" height="2.3" fill="#d8d8d8"/><rect x="76.25" y="6.2" width="1.1" height="2.3" fill="#d8d8d8"/><rect x="92.33" y="6.2" width="1.1" height="2.3" fill="#d8d8d8"/><rect x="108.40" y="6.2" width="1.1" height="2.3" fill="#d8d8d8"/><rect x="124.47" y="6.2" width="1.1" height="2.3" fill="#d8d8d8"/><rect x="140.55" y="6.2" width="1.1" height="2.3" fill="#d8d8d8"/><rect x="156.62" y="6.2" width="1.1" height="2.3" fill="#d8d8d8"/><rect x="172.70" y="6.2" width="1.1" height="2.3" fill="#d8d8d8"/><rect x="188.77" y="6.2" width="1.1" height="2.3" fill="#d8d8d8"/><rect x="204.85" y="6.2" width="1.1" height="2.3" fill="#d8d8d8"/><rect x="220.93" y="6.2" width="1.1" height="2.3" fill="#d8d8d8"/><rect x="237.00" y="6.2" width="1.1" height="2.3" fill="#d8d8d8"/><rect x="253.07" y="6.2" width="1.1" height="2.3" fill="#d8d8d8"/><rect x="269.15" y="6.2" width="1.1" height="2.3" fill="#d8d8d8"/><rect x="285.22" y="6.2" width="1.1" height="2.3" fill="#d8d8d8"/><rect x="301.30" y="6.2" width="1.1" height="2.3" fill="#d8d8d8"/><rect x="317.37" y="6.2" width="1.1" height="2.3" fill="#d8d8d8"/><rect x="333.45" y="6.2" width="1.1" height="2.3" fill="#d8d8d8"/><rect x="349.53" y="6.2" width="1.1" height="2.3" fill="#d8d8d8"/></svg>
<div class="t" style="left:197.50px;top:293.2px;width:20px;text-align:center;font-size:6px">0</div>
<div class="t" style="left:277.88px;top:293.2px;width:20px;text-align:center;font-size:6px">5</div>
<div class="t" style="left:358.25px;top:293.2px;width:20px;text-align:center;font-size:6px">10</div>
<div class="t" style="left:438.62px;top:293.2px;width:20px;text-align:center;font-size:6px">15</div>
<div class="t" style="left:519.00px;top:293.2px;width:20px;text-align:center;font-size:6px">20</div>
<div class="a" style="left:195px;top:300px;width:357px;height:118px;background:#212125;"></div>
<div class="a" style="left:194px;top:419px;width:358px;height:4.5px;background:#18191c;"></div>
<div class="a" style="left:200px;top:420px;width:22px;height:2px;background:#7a7a7a;"></div>
<svg class="a" style="left:195px;top:300px;" width="357" height="118" viewBox="0 0 357 118"><path d="M28.5 0 V118" stroke="#29292e" stroke-width="1"/><path d="M44.5 0 V118" stroke="#29292e" stroke-width="1"/><path d="M60.5 0 V118" stroke="#29292e" stroke-width="1"/><path d="M76.5 0 V118" stroke="#29292e" stroke-width="1"/><path d="M92.5 0 V118" stroke="#29292e" stroke-width="1"/><path d="M108.5 0 V118" stroke="#29292e" stroke-width="1"/><path d="M124.5 0 V118" stroke="#29292e" stroke-width="1"/><path d="M140.5 0 V118" stroke="#29292e" stroke-width="1"/><path d="M156.5 0 V118" stroke="#29292e" stroke-width="1"/><path d="M172.5 0 V118" stroke="#29292e" stroke-width="1"/><path d="M188.5 0 V118" stroke="#29292e" stroke-width="1"/><path d="M204.5 0 V118" stroke="#29292e" stroke-width="1"/><path d="M220.5 0 V118" stroke="#29292e" stroke-width="1"/><path d="M237.5 0 V118" stroke="#29292e" stroke-width="1"/><path d="M253.5 0 V118" stroke="#29292e" stroke-width="1"/><path d="M269.5 0 V118" stroke="#29292e" stroke-width="1"/><path d="M285.5 0 V118" stroke="#29292e" stroke-width="1"/><path d="M301.5 0 V118" stroke="#29292e" stroke-width="1"/><path d="M317.5 0 V118" stroke="#29292e" stroke-width="1"/><path d="M333.5 0 V118" stroke="#29292e" stroke-width="1"/><path d="M349.5 0 V118" stroke="#29292e" stroke-width="1"/><path d="M0 2.5 H357" stroke="#29292e" stroke-width="1"/><path d="M0 20.5 H357" stroke="#29292e" stroke-width="1"/><path d="M0 37.5 H357" stroke="#29292e" stroke-width="1"/><path d="M0 54.5 H357" stroke="#29292e" stroke-width="1"/><path d="M0 72.5 H357" stroke="#29292e" stroke-width="1"/><path d="M0 89.5 H357" stroke="#29292e" stroke-width="1"/><path d="M0 107.5 H357" stroke="#29292e" stroke-width="1"/></svg>
<svg class="a" style="left:0px;top:0px;pointer-events:none" width="700" height="438" viewBox="0 0 700 438"><path d="M195 337.5 H448.62" stroke="#7c7c7c" stroke-width="1"/><path d="M287.88 399.5 H551" stroke="#7c7c7c" stroke-width="1"/><path d="M207.5 337.0 C448.62 337.0 287.88 399.4 528.70 399.4" fill="none" stroke="#e00c0c" stroke-width="1.15"/><circle cx="448.62" cy="337.0" r="1.7" fill="#f07a7a"/><circle cx="287.88" cy="399.4" r="1.5" fill="#f07a7a"/><path d="M207.5 300 V418" stroke="#e00c0c" stroke-width="1.5"/><circle cx="207.5" cy="337.0" r="2.9" fill="#ff0a0a"/><circle cx="528.70" cy="399.4" r="2.9" fill="#ff0a0a"/></svg>
<div class="t" style="left:192.3px;top:299.90px;width:30px;text-align:center;font-size:6px">50</div>
<div class="t" style="left:192.3px;top:317.35px;width:30px;text-align:center;font-size:6px">25</div>
<div class="t" style="left:192.3px;top:352.25px;width:30px;text-align:center;font-size:6px">-25</div>
<div class="t" style="left:192.3px;top:369.70px;width:30px;text-align:center;font-size:6px">-50</div>
<div class="t" style="left:192.3px;top:387.15px;width:30px;text-align:center;font-size:6px">-75</div>
<div class="t" style="left:192.3px;top:404.60px;width:30px;text-align:center;font-size:6px">-100</div>
<div class="a" style="left:428px;top:401px;width:123.5px;height:18px;background:#212125;"></div>
<svg class="a" style="left:432px;top:406px;" width="10" height="9" viewBox="0 0 10 9"><path d="M1 8 L8.5 1" stroke="#d0d0d0" stroke-width="0.9"/><circle cx="1" cy="8" r="0.8" fill="#d0d0d0"/><circle cx="8.5" cy="1" r="0.8" fill="#d0d0d0"/></svg>
<svg class="a" style="left:448px;top:406px;" width="10" height="9" viewBox="0 0 10 9"><path d="M1 8 C1 3 4 1 8.5 1" fill="none" stroke="#d0d0d0" stroke-width="0.9"/><circle cx="1" cy="8" r="0.8" fill="#d0d0d0"/></svg>
<div class="a" style="left:463px;top:405px;width:0.8px;height:10px;background:#303136;"></div>
<svg class="a" style="left:468.5px;top:406px;" width="9" height="9" viewBox="0 0 9 9"><path d="M1 1 L7.5 7.5 M7.5 1 L1 7.5" stroke="#d0d0d0" stroke-width="0.9"/></svg>
<svg class="a" style="left:484.5px;top:406px;" width="9" height="9" viewBox="0 0 9 9"><path d="M1 1 L7.5 7.5" stroke="#d0d0d0" stroke-width="0.9"/><circle cx="4.25" cy="4.25" r="0.9" fill="#d0d0d0"/></svg>
<svg class="a" style="left:501.5px;top:406px;" width="8" height="9" viewBox="0 0 8 9"><path d="M1 1 L5.5 4.3 L1 7.6" fill="none" stroke="#d0d0d0" stroke-width="0.9"/></svg>
<div class="a" style="left:515px;top:405px;width:0.8px;height:10px;background:#303136;"></div>
<svg class="a" style="left:519.5px;top:406px;" width="10" height="9" viewBox="0 0 10 9"><circle cx="3.4" cy="3.4" r="2.3" fill="none" stroke="#d0d0d0" stroke-width="1.1"/><path d="M5 5 L8 8" stroke="#d0d0d0" stroke-width="1.5"/></svg>
<div class="a" style="left:535px;top:405px;width:0.8px;height:10px;background:#303136;"></div>
<svg class="a" style="left:539.5px;top:406px;" width="9" height="9" viewBox="0 0 9 9"><path d="M1 1 L7.5 3.8 L5 4.8 L7.6 7.4 L6.8 8.2 L4.2 5.6 L3.2 8 Z" fill="#f0f0f0"/></svg>
<div class="a" style="left:195px;top:300px;width:357px;height:1.2px;background:#ee0c0c;"></div>
<div class="a" style="left:195px;top:300px;width:1.2px;height:119.3px;background:#ee0c0c;"></div>
<div class="a" style="left:550.8px;top:300px;width:1.2px;height:101px;background:#ee0c0c;"></div>
<div class="a" style="left:195px;top:418px;width:233px;height:1.3px;background:#ee0c0c;"></div>
<div class="a" style="left:552.8px;top:221.5px;width:1px;height:1.2px;background:#5a5a5a;"></div>
<div class="a" style="left:552.8px;top:223.9px;width:1px;height:1.2px;background:#5a5a5a;"></div>
<div class="a" style="left:552.8px;top:226.3px;width:1px;height:1.2px;background:#5a5a5a;"></div>
<div class="a" style="left:552.8px;top:228.7px;width:1px;height:1.2px;background:#5a5a5a;"></div>
<div class="t" style="left:489px;top:429px;">Resolution</div>
<div class="a" style="left:524.5px;top:426px;width:22px;height:11.5px;background:#1d1e22;"></div>
<div class="t" style="left:528px;top:429px;">50 %</div>
<div class="a" style="left:546px;top:426px;width:6.5px;height:11.5px;background:#2e2f34;border:1px solid #35363b"></div>
<svg class="a" style="left:547.5px;top:430.5px;" width="4" height="3" viewBox="0 0 4 3"><path d="M0.3 0.5 H3.5 L1.9 2.2 Z" fill="#ccc"/></svg>
<div class="a" style="left:546px;top:425px;width:9px;height:12px;background:#2e2f34;border:1px solid #35363b;border-radius:1px"></div>
<svg class="a" style="left:548.5px;top:429.5px;" width="4" height="3" viewBox="0 0 4 3"><path d="M0.3 0.5 H3.5 L1.9 2.2 Z" fill="#ccc"/></svg>
<div class="t" style="left:561.5px;top:429px;">Layout</div>
<div class="a" style="left:587px;top:425px;width:92px;height:13px;background:#1d1e22;"></div>
<svg class="a" style="left:590px;top:429.5px;" width="4" height="3" viewBox="0 0 4 3"><path d="M0.3 0.5 H3.5 L1.9 2.2 Z" fill="#ccc"/></svg>
<div class="t" style="left:598px;top:429px;letter-spacing:-0.15px">Scene 0</div>
<svg class="a" style="left:681px;top:426px;" width="8" height="9" viewBox="0 0 8 9"><path d="M0.8 4.5 H7.2 M4 1.3 V7.7" stroke="#eee" stroke-width="1.3"/></svg>
<svg class="a" style="left:690.5px;top:426px;" width="8" height="9" viewBox="0 0 8 9"><path d="M0.8 4.5 H7.2" stroke="#eee" stroke-width="1.3"/></svg>
</body></html>
